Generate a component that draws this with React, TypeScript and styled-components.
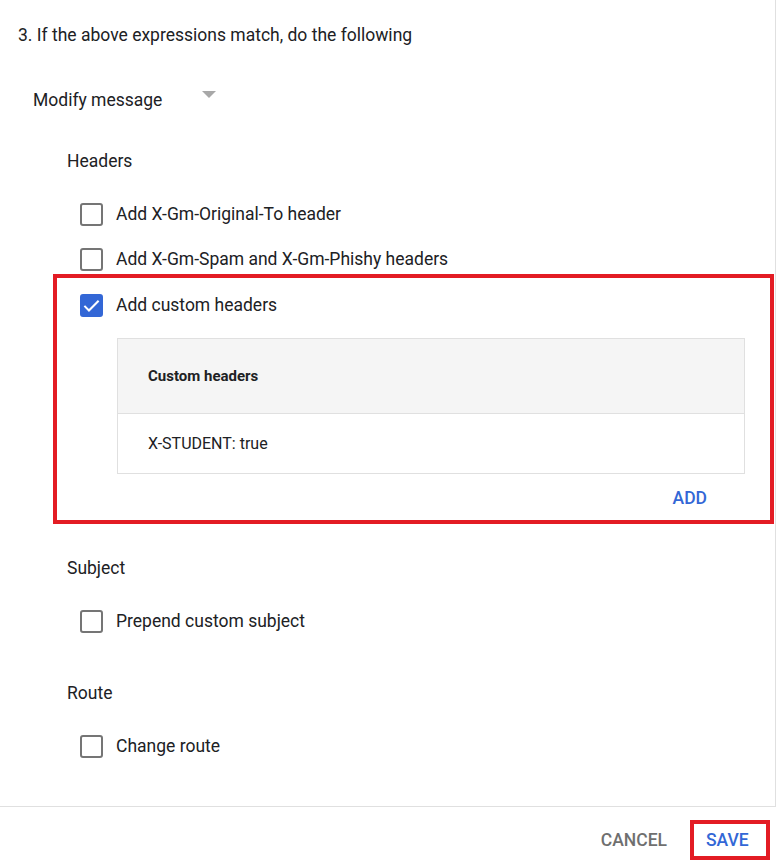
import styled, { createGlobalStyle } from 'styled-components';

const GlobalStyle = createGlobalStyle`
  html, body {
    margin: 0;
    padding: 0;
    background: #ffffff;
  }
  body {
    font-family: Roboto, 'Liberation Sans', Arial, sans-serif;
    color: #202124;
    -webkit-font-smoothing: antialiased;
  }
`;

const BLUE = '#3367d6';
const RED = '#e31c24';

const Page = styled.div`
  width: 776px;
  height: 866px;
  display: flex;
  flex-direction: column;
`;

const Panel = styled.div`
  box-sizing: border-box;
  height: 807px;
  padding-left: 18px;
  border-right: 1px solid #e0e0e0;
  border-bottom: 1px solid #e0e0e0;
`;

const StepTitle = styled.div`
  font-size: 17.5px;
  line-height: 24px;
  padding-top: 23px;
`;

const Select = styled.div`
  margin-top: 41px;
  margin-left: 15px;
  width: 183px;
  height: 24px;
  display: flex;
  align-items: center;
  font-size: 17.5px;
  line-height: 24px;
`;

const Caret = styled.span`
  margin-left: auto;
  margin-top: -12px;
  width: 0;
  height: 0;
  border-left: 7px solid transparent;
  border-right: 7px solid transparent;
  border-top: 7px solid #a8a8a8;
`;

const Section = styled.div<{ $top: number }>`
  margin-top: ${(p) => p.$top}px;
  padding-left: 49px;
`;

const SectionLabel = styled.div`
  font-size: 17.5px;
  line-height: 24px;
`;

const CheckRow = styled.label<{ $top: number }>`
  display: flex;
  align-items: center;
  height: 24px;
  margin-top: ${(p) => p.$top}px;
  padding-left: 13px;
  font-size: 17.5px;
  line-height: 24px;
  gap: 13px;
`;

const Box = styled.span<{ $checked?: boolean }>`
  box-sizing: border-box;
  width: 23px;
  height: 23px;
  border-radius: 3px;
  border: 2px solid ${(p) => (p.$checked ? BLUE : '#757575')};
  background: ${(p) => (p.$checked ? BLUE : '#ffffff')};
  display: flex;
  align-items: center;
  justify-content: center;
  flex-shrink: 0;
`;

const Highlight = styled.div`
  box-sizing: border-box;
  margin-top: 3px;
  margin-left: -14px;
  margin-right: 1px;
  border: 4px solid ${RED};
  padding: 15px 0 10px 10px;
`;

const Table = styled.div`
  margin: 21px 25px 0 50px;
  border: 1px solid #e0e0e0;
`;

const TableHead = styled.div`
  height: 74px;
  display: flex;
  align-items: center;
  padding-left: 30px;
  background: #f5f5f5;
  border-bottom: 1px solid #e0e0e0;
  font-size: 15px;
  font-weight: 700;
`;

const TableCell = styled.div`
  height: 59px;
  display: flex;
  align-items: center;
  padding-left: 30px;
  font-size: 16px;
`;

const AddRow = styled.div`
  display: flex;
  justify-content: flex-end;
  margin-top: 12px;
  padding-right: 63px;
`;

const TextButton = styled.button<{ $color: string }>`
  border: none;
  background: none;
  padding: 0;
  font-family: inherit;
  font-size: 17.5px;
  line-height: 24px;
  font-weight: 500;
  color: ${(p) => p.$color};
  cursor: pointer;
`;

const Footer = styled.div`
  box-sizing: border-box;
  flex: 1;
  display: flex;
  align-items: center;
  justify-content: flex-end;
  padding: 7px 6px 0 0;
  gap: 23px;
`;

const SaveFrame = styled.div`
  box-sizing: border-box;
  width: 80px;
  height: 40px;
  border: 4px solid ${RED};
  display: flex;
  align-items: center;
  padding-left: 12px;
`;

const Checkbox = ({ checked, label, top }: { checked?: boolean; label: string; top: number }) => (
  <CheckRow $top={top}>
    <Box $checked={checked}>
      {checked && (
        <svg width="19" height="19" viewBox="0 0 24 24">
          <path d="M3 12.5l5.8 5.8L21 6" fill="none" stroke="#fff" strokeWidth="2.6" />
        </svg>
      )}
    </Box>
    {label}
  </CheckRow>
);

export default function App() {
  return (
    <Page>
      <GlobalStyle />
      <Panel>
        <StepTitle>3. If the above expressions match, do the following</StepTitle>
        <Select>
          Modify message
          <Caret />
        </Select>

        <Section $top={37}>
          <SectionLabel>Headers</SectionLabel>
          <Checkbox top={29} label="Add X-Gm-Original-To header" />
          <Checkbox top={21} label="Add X-Gm-Spam and X-Gm-Phishy headers" />
          <Highlight>
            <Checkbox top={0} checked label="Add custom headers" />
            <Table>
              <TableHead>Custom headers</TableHead>
              <TableCell>X-STUDENT: true</TableCell>
            </Table>
            <AddRow>
              <TextButton $color={BLUE}>ADD</TextButton>
            </AddRow>
          </Highlight>
        </Section>

        <Section $top={32}>
          <SectionLabel>Subject</SectionLabel>
          <Checkbox top={29} label="Prepend custom subject" />
        </Section>

        <Section $top={48}>
          <SectionLabel>Route</SectionLabel>
          <Checkbox top={29} label="Change route" />
        </Section>
      </Panel>
      <Footer>
        <TextButton $color="#6f6f6f">CANCEL</TextButton>
        <SaveFrame>
          <TextButton $color={BLUE}>SAVE</TextButton>
        </SaveFrame>
      </Footer>
    </Page>
  );
}
